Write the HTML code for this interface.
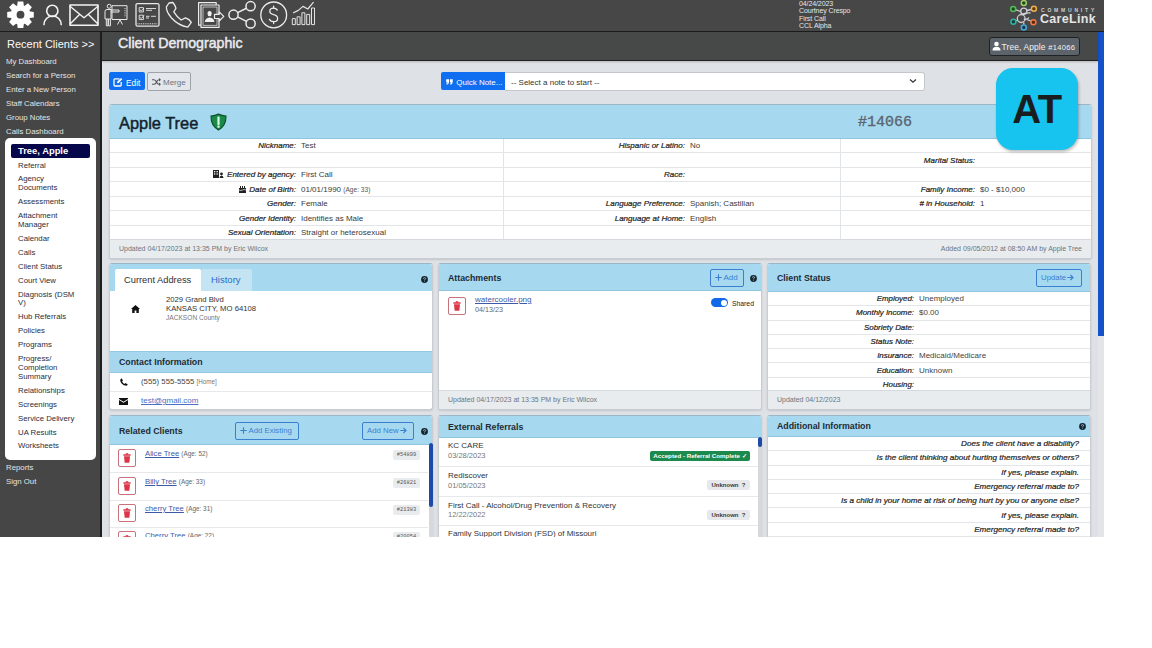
<!DOCTYPE html>
<html><head><meta charset="utf-8">
<style>
*{box-sizing:border-box;margin:0;padding:0}
html,body{width:1152px;height:648px;overflow:hidden;background:#fff;font-family:"Liberation Sans",sans-serif;color:#212529}
.a{position:absolute}
#top{left:0;top:0;width:1104px;height:32px;background:#474747;border-bottom:1px solid #1c1c1c}
#side{left:0;top:32px;width:102px;height:505px;background:#464646;border-right:2px solid #1e1e1e}
#hdr{left:102px;top:32px;width:996px;height:29px;background:#474848;border-bottom:1px solid #222;box-shadow:0 1px 2px rgba(0,0,0,.2);z-index:1}
#content{left:102px;top:61px;width:996px;height:476px;background:#dee1e5}
#sb{left:1098px;top:32px;width:6px;height:505px;background:#e4e5e7}
#sbthumb{left:1098px;top:32px;width:6px;height:304px;background:#1352c8}
.card{position:absolute;background:#fff;border:1px solid #c9cdd2;border-top-color:#9cb6c6;border-radius:3px;overflow:hidden;box-shadow:0 1px 2px rgba(0,0,0,.12)}
.ch{position:absolute;left:0;top:0;right:0;background:#a6d9f0;border-bottom:1px solid #8fc5df}
.ct{position:absolute;font-size:10px;color:#1e2a33}
.foot{position:absolute;left:0;right:0;bottom:0;background:#e9ecef;border-top:1px solid #d5d9dd;font-size:7px;color:#6c757d}
.sl{font-size:7.8px;line-height:13.9px;color:#e4e4e4;white-space:nowrap}
.sm{font-size:7.8px;line-height:8.9px;color:#2d2d3a;white-space:nowrap}
.sm div{padding:2.5px 0}
.row{height:14.45px;border-bottom:1px solid #e3e6e9}
.lab{position:absolute;font-size:8px;line-height:14.45px;font-style:italic;font-weight:normal;-webkit-text-stroke:0.2px #222;color:#222;white-space:nowrap;text-align:right}
.val{position:absolute;font-size:8px;line-height:14.45px;color:#3a3a3a;white-space:nowrap}
.ttl{font-size:8.8px;font-weight:bold;color:#1d2b36;white-space:nowrap}
.row2{height:14.3px;border-bottom:1px solid #e3e6e9}
.row3{height:14.3px;border-bottom:1px solid #e3e6e9}
.lab2{position:absolute;font-size:7.9px;line-height:14.3px;font-style:italic;font-weight:normal;-webkit-text-stroke:0.2px #222;color:#222;white-space:nowrap}
.val2{position:absolute;font-size:8px;line-height:14.3px;color:#444;white-space:nowrap}
.ai{position:absolute;right:11px;font-size:8.1px;line-height:14.3px;font-style:italic;font-weight:normal;-webkit-text-stroke:0.2px #222;color:#222;white-space:nowrap}
.rc{position:absolute;left:35px;text-decoration-color:#7d95cf;font-size:7.7px;line-height:12px;color:#3d5aa8;white-space:nowrap}
.rc span{font-size:6.4px;color:#666}
.bdg{position:absolute;left:283px;width:27px;height:9.5px;background:#e9ecef;border-radius:2px;font-size:5.4px;line-height:10.5px;text-align:center;color:#555;font-family:"Liberation Mono",monospace}
.er{position:absolute;left:9px;margin-top:1px;font-size:8px;line-height:9.5px;color:#333;white-space:nowrap}
.er span{font-size:7.5px;color:#777}
.ubdg{position:absolute;left:268px;width:43px;height:10px;background:#e6e8eb;border-radius:2px;font-size:6px;font-weight:bold;line-height:10px;text-align:center;color:#3a3a3a;white-space:nowrap}
</style></head><body>

<div id="top" class="a">
<svg class="a" style="left:0;top:0" width="330" height="30" viewBox="0 0 330 30">
 <g fill="#fff">
  <g transform="translate(20.5,14.7)">
   <circle r="9.8"/>
   <path d="M-2.8 -13.3 L2.8 -13.3 L3.6 -7 L-3.6 -7 Z"/>
   <path d="M-2.8 -13.3 L2.8 -13.3 L3.6 -7 L-3.6 -7 Z" transform="rotate(45)"/>
   <path d="M-2.8 -13.3 L2.8 -13.3 L3.6 -7 L-3.6 -7 Z" transform="rotate(90)"/>
   <path d="M-2.8 -13.3 L2.8 -13.3 L3.6 -7 L-3.6 -7 Z" transform="rotate(135)"/>
   <path d="M-2.8 -13.3 L2.8 -13.3 L3.6 -7 L-3.6 -7 Z" transform="rotate(180)"/>
   <path d="M-2.8 -13.3 L2.8 -13.3 L3.6 -7 L-3.6 -7 Z" transform="rotate(225)"/>
   <path d="M-2.8 -13.3 L2.8 -13.3 L3.6 -7 L-3.6 -7 Z" transform="rotate(270)"/>
   <path d="M-2.8 -13.3 L2.8 -13.3 L3.6 -7 L-3.6 -7 Z" transform="rotate(315)"/>
   <circle r="3.9" fill="#474747"/>
  </g>
 </g>
 <g fill="none" stroke="#f4f4f4" stroke-width="1.6" stroke-linejoin="round" stroke-linecap="round">
  <circle cx="52.3" cy="10.9" r="5.6"/>
  <path d="M44 24.6 A8.6 8.6 0 0 1 61.2 24.6"/>
  <rect x="70" y="5" width="28" height="20.2"/>
  <path d="M70.3 6.5 L84 17.8 L97.7 6.5 M70.3 23.8 L79.5 14.5 M97.7 23.8 L88.5 14.5" stroke-width="1.4"/>
 </g>
 <g fill="none" stroke="#e8e8e8" stroke-width="1" stroke-linejoin="round">
  <circle cx="109.2" cy="6.3" r="2"/>
  <path d="M105 19 L105 11.5 Q105 9.5 107 9.5 L111 9.5 L111 19 Z"/>
  <path d="M106.3 19 L106.3 25.8 L108 25.8 L108 19 M108.6 19 L108.6 25.8 L110.4 25.8 L110.4 19"/>
  <path d="M111 10 L119 10 L119 12 L111 12"/>
  <rect x="112" y="5.7" width="15" height="13.8"/>
  <path d="M117.5 24.5 L120 20 L122.5 24.5"/>
  <path d="M125 8 V17" stroke-dasharray="1 1.2"/>
 </g>
 <g fill="none" stroke="#e8e8e8" stroke-width="1.3" stroke-linejoin="round">
  <rect x="136" y="3.6" width="23" height="22.6" rx="1.5"/>
  <rect x="139.2" y="7.6" width="4.2" height="4.4" stroke-width="0.9"/>
  <rect x="139.2" y="15.2" width="4.2" height="4.4" stroke-width="0.9"/>
  <path d="M140 9.8 L141.3 11 L144 8 M140 17.4 L141.3 18.6 L144 15.6" stroke-width="0.9"/>
  <path d="M146 8.5 H156 M146 10.3 H152 M146 16.3 H149.5 M151 16.3 H156 M146 18 H149" stroke-width="0.9"/>
  <path d="M137.5 23.8 H157.5" stroke-dasharray="1 0.8" stroke-width="1"/>
 </g>
 <g fill="none" stroke="#ececec" stroke-width="1.3" stroke-linejoin="round">
  <path d="M169 3 L172.6 2.5 Q173.8 2.8 176 8.2 L173.8 11.8 Q177 17 181.2 20 L185.5 17.8 Q189.5 19 191.3 22.4 L187.8 27.2 Q178.5 25.5 171.5 18 Q166 11.5 166.4 6.8 Z"/>
 </g>
 <g fill="none" stroke="#ececec" stroke-width="1.2" stroke-linejoin="round">
  <path d="M201 25.2 L198.6 25.2 L198.6 2.6 L216.2 2.6 L216.2 5"/>
  <rect x="201" y="5" width="18" height="22.4"/>
  <rect x="203" y="7" width="14" height="18.4" stroke-width="0.7"/>
  <path d="M214.5 14.3 L219.2 14.3 L219.2 11.8 L223.8 16.4 L219.2 21 L219.2 18.5 L214.5 18.5 Z" fill="#474747"/>
 </g>
 <g fill="#f0f0f0">
  <ellipse cx="209.6" cy="13.6" rx="2.1" ry="2.7"/>
  <path d="M204.8 22 Q205 18 209.6 17.4 Q214.2 18 214.4 22 Z"/>
 </g>
 <g fill="none" stroke="#ececec" stroke-width="1.5">
  <circle cx="233.5" cy="14.7" r="4.6"/>
  <circle cx="250.6" cy="6.2" r="4.6"/>
  <circle cx="250.6" cy="23.5" r="4.6"/>
  <path d="M237.6 12.6 L246.5 8.3 M237.6 16.8 L246.5 21.4"/>
 </g>
 <g fill="none" stroke="#ececec" stroke-width="1.3" stroke-linecap="round">
  <circle cx="273.7" cy="14.9" r="12.9"/>
  <path d="M277.3 10 Q276 8.2 273.6 8.2 Q269.8 8.2 269.8 11.3 Q269.8 13.8 273.6 14.6 Q277.6 15.5 277.6 18.4 Q277.6 21.6 273.6 21.6 Q270.6 21.6 269.4 19.4"/>
  <path d="M273.6 6.2 V8.2 M273.6 21.6 V23.6"/>
 </g>
 <g fill="none" stroke="#e4e4e4" stroke-width="1" stroke-linejoin="round">
  <rect x="292.3" y="18.6" width="3" height="6"/>
  <rect x="297.1" y="16.8" width="3" height="7.8"/>
  <rect x="301.9" y="12.8" width="3" height="11.8"/>
  <rect x="306.7" y="14.4" width="3" height="10.2"/>
  <rect x="311.5" y="8" width="3" height="16.6"/>
  <path d="M293.5 12.8 L298.3 10.4 L303 6.4 L307.8 9 L313.3 2.4" stroke-width="1.2" stroke-linecap="round"/>
 </g>
</svg>
<div class="a" style="left:799px;top:0px;font-size:7px;line-height:7.4px;color:#e6e6e6;letter-spacing:-0.1px">04/24/2023<br>Courtney Crespo<br>First Call<br>CCL Alpha</div>
<svg class="a" style="left:1004px;top:0" width="40" height="31" viewBox="1004 0 40 31">
 <g fill="none" stroke="#cfcfd4" stroke-width="1.3">
  <circle cx="1023.8" cy="11.2" r="3.1"/>
  <circle cx="1021.2" cy="18.6" r="3.9"/>
  <path d="M1020.5 14.5 Q1026 12.5 1030.5 13 M1023.8 19 Q1027.5 20 1029 17.5"/>
  <path d="M1016 9.8 L1020.5 11.5 M1031 9.5 L1027 10.5 M1016.2 20.8 L1017.8 20 M1030.8 20.8 L1026.5 19.5 M1023.8 24.6 V22.5"/>
 </g>
 <g stroke-width="1.5">
  <circle cx="1023.8" cy="3" r="2.5" fill="#1f4a14" stroke="#9fd36a"/>
  <circle cx="1013.2" cy="8.9" r="2.5" fill="#1e4a22" stroke="#4fbf5a"/>
  <circle cx="1033.9" cy="8.7" r="2.5" fill="#5a3a0a" stroke="#f2b04a"/>
  <circle cx="1013.4" cy="21.7" r="2.5" fill="#12403a" stroke="#2fb3a0"/>
  <circle cx="1033.4" cy="22.2" r="2.5" fill="#5a2a10" stroke="#ee7a45"/>
  <circle cx="1023.8" cy="27.6" r="2.5" fill="#143a50" stroke="#4aa8d8"/>
 </g>
</svg>
<div class="a" style="left:1041px;top:6.7px;font-size:5px;line-height:6px;letter-spacing:2.8px;color:#d0d0d0;font-weight:bold">COMMUNITY</div>
<div class="a" style="left:1040px;top:12px;font-size:12.5px;line-height:14px;letter-spacing:0.3px;color:#e4e4e4;font-weight:bold">CareLink</div>
</div>


<div id="side" class="a">
 <div class="a" style="left:7px;top:6px;font-size:11px;line-height:13px;color:#fafafa;white-space:nowrap">Recent Clients &gt;&gt;</div>
 <div class="a sl" style="left:6px;top:23px">My Dashboard<br>Search for a Person<br>Enter a New Person<br>Staff Calendars<br>Group Notes<br>Calls Dashboard</div>
 <div class="a" style="left:5px;top:106px;width:91px;height:322px;background:#fff;border-radius:5px"></div>
 <div class="a" style="left:11px;top:112px;width:79px;height:14px;background:#06064a;border-radius:2px"></div>
 <div class="a" style="left:18px;top:112px;font-size:9.4px;line-height:14px;font-weight:bold;color:#fff">Tree, Apple</div>
 <div class="a sm" style="left:18px;top:127px">
  <div>Referral</div><div>Agency<br>Documents</div><div>Assessments</div><div>Attachment<br>Manager</div><div>Calendar</div><div>Calls</div><div>Client Status</div><div>Court View</div><div>Diagnosis (DSM<br>V)</div><div>Hub Referrals</div><div>Policies</div><div>Programs</div><div>Progress/<br>Completion<br>Summary</div><div>Relationships</div><div>Screenings</div><div>Service Delivery</div><div>UA Results</div><div>Worksheets</div>
 </div>
 <div class="a sl" style="left:6px;top:429px">Reports<br>Sign Out</div>
</div>


<div id="hdr" class="a">
 <div class="a" style="left:16px;top:3px;font-size:14.2px;line-height:16px;color:#ececec;-webkit-text-stroke:0.45px #ececec;white-space:nowrap">Client Demographic</div>
 <div class="a" style="left:887px;top:4.5px;width:91px;height:19px;background:#5c636a;border:1.5px solid #1f2225;border-radius:3px"></div>
 <svg class="a" style="left:890px;top:9px" width="9" height="10" viewBox="0 0 9 10"><circle cx="4.5" cy="3" r="2.3" fill="#fff"/><path d="M0.5 9.5 Q0.5 5.8 4.5 5.8 Q8.5 5.8 8.5 9.5 Z" fill="#fff"/></svg>
 <div class="a" style="left:899.5px;top:6px;font-size:8.4px;line-height:18px;color:#f2f2f2;white-space:nowrap;letter-spacing:0.15px">Tree, Apple <span style="font-size:7.6px;letter-spacing:0.3px">#14066</span></div>
</div>

<div id="content" class="a"></div>
<div id="sb" class="a"></div>
<div id="sbthumb" class="a"></div>


<!-- button row -->
<div class="a" style="left:109px;top:72px;width:36px;height:18px;background:#0f6ff0;border-radius:2px"></div>
<svg class="a" style="left:113px;top:77px" width="10" height="10" viewBox="0 0 10 10"><path d="M6.5 1.8 H2 Q1 1.8 1 2.8 V8 Q1 9 2 9 H7.2 Q8.2 9 8.2 8 V5" fill="none" stroke="#fff" stroke-width="1.3"/><path d="M4 6.3 L4.3 4.6 L8 0.9 L9.3 2.2 L5.6 5.9 Z" fill="#fff"/></svg>
<div class="a" style="left:126px;top:74px;font-size:8.3px;line-height:18px;color:#fff">Edit</div>
<div class="a" style="left:147px;top:72px;width:44px;height:19px;background:#e3e6ea;border:1px solid #9ea3a8;border-radius:2px"></div>
<svg class="a" style="left:152px;top:78px" width="9" height="8" viewBox="0 0 9 8"><path d="M0 1.8 H2 Q3.5 1.8 4.5 4 Q5.5 6.2 7 6.2 H8 M0 6.2 H2 Q3.5 6.2 4.5 4 Q5.5 1.8 7 1.8 H8" fill="none" stroke="#555" stroke-width="1.1"/><path d="M7 0 L9 1.8 L7 3.6 Z M7 4.4 L9 6.2 L7 8 Z" fill="#555"/></svg>
<div class="a" style="left:163px;top:73px;font-size:8px;line-height:19px;color:#6c757d">Merge</div>

<div class="a" style="left:441px;top:72px;width:65px;height:18px;background:#0f6ff0;border-radius:2px 0 0 2px"></div>
<div class="a" style="left:446px;top:73.5px;font-size:8px;line-height:18px;color:#fff;white-space:nowrap"><svg style="vertical-align:0px;margin-right:1px" width="7" height="6" viewBox="0 0 7 6"><path d="M0.2 3 Q0.2 0.5 2.8 0.2 V1.4 Q1.6 1.6 1.5 2.6 H3 V5.8 H0.2 Z M3.9 3 Q3.9 0.5 6.5 0.2 V1.4 Q5.3 1.6 5.2 2.6 H6.7 V5.8 H3.9 Z" fill="#fff" transform="rotate(180 3.45 3)"/></svg> Quick Note...</div>
<div class="a" style="left:505px;top:72px;width:420px;height:19px;background:#fff;border:1px solid #c3c7cb;border-left:none;border-radius:0 3px 3px 0"></div>
<div class="a" style="left:511px;top:73px;font-size:8px;line-height:19px;color:#333;white-space:nowrap">-- Select a note to start --</div>
<svg class="a" style="left:909px;top:78px" width="8" height="6" viewBox="0 0 8 6"><path d="M1 1.5 L4 4.3 L7 1.5" fill="none" stroke="#333" stroke-width="1.2"/></svg>
<!-- demographic card -->
<div class="card" style="left:109px;top:104px;width:983px;height:155px">
  <div class="ch" style="height:34px"></div>
  <div class="a" style="left:9px;top:8px;font-size:16.4px;line-height:20px;color:#14212b;-webkit-text-stroke:0.45px #14212b">Apple Tree</div>
  <svg class="a" style="left:100px;top:8px" width="17" height="18" viewBox="0 0 17 18"><path d="M8.5 1 Q12 2.8 16 3 Q16.3 12.5 8.5 17 Q0.7 12.5 1 3 Q5 2.8 8.5 1 Z" fill="#1a8a48" stroke="#0b4f2b" stroke-width="1.1"/><rect x="7.4" y="3.6" width="2.2" height="8.3" rx="0.6" fill="#d8ffe2"/><rect x="7.4" y="12.6" width="2.2" height="2.1" rx="0.5" fill="#d8ffe2"/></svg>
  <div class="a" style="left:748px;top:9px;font-family:'Liberation Mono',monospace;font-size:15px;line-height:18px;color:#5a6570;-webkit-text-stroke:0.35px #5a6570">#14066</div>
  <div class="a" style="left:0;top:34px;width:981px">
   <div class="row"></div><div class="row"></div><div class="row"></div><div class="row"></div><div class="row"></div><div class="row"></div><div class="row" style="border-bottom:none"></div>
  </div>
  <div class="a" style="left:393px;top:34px;width:1px;height:101px;background:#e2e5e8"></div>
  <div class="a" style="left:730px;top:34px;width:1px;height:101px;background:#e2e5e8"></div>
  <div class="lab" style="right:795px;top:34px">Nickname:</div><div class="val" style="left:191px;top:34px">Test</div>
  <div class="lab" style="right:795px;top:63px"><svg style="vertical-align:-1px;margin-right:3px" width="11" height="8" viewBox="0 0 11 8"><path d="M0 0 H6 V8 H0 Z" fill="#222"/><rect x="1" y="1" width="1.3" height="1.3" fill="#fff"/><rect x="3.5" y="1" width="1.3" height="1.3" fill="#fff"/><rect x="1" y="3.3" width="1.3" height="1.3" fill="#fff"/><rect x="3.5" y="3.3" width="1.3" height="1.3" fill="#fff"/><circle cx="8.5" cy="4" r="1.4" fill="#222"/><path d="M6.5 8 Q6.5 5.8 8.5 5.8 Q10.5 5.8 10.5 8 Z" fill="#222"/></svg>Entered by agency:</div><div class="val" style="left:191px;top:63px">First Call</div>
  <div class="lab" style="right:795px;top:77.5px"><svg style="vertical-align:-1px;margin-right:3px" width="7" height="8" viewBox="0 0 7 8"><rect x="0" y="3" width="7" height="5" fill="#222"/><rect x="1" y="1" width="1" height="2" fill="#222"/><rect x="3" y="1" width="1" height="2" fill="#222"/><rect x="5" y="1" width="1" height="2" fill="#222"/><path d="M0 5 Q1.7 6 3.5 5 Q5.3 4 7 5" stroke="#fff" stroke-width="0.7" fill="none"/></svg>Date of Birth:</div><div class="val" style="left:191px;top:77.5px">01/01/1990 <span style="font-size:6.6px;color:#555">(Age: 33)</span></div>
  <div class="lab" style="right:795px;top:92px">Gender:</div><div class="val" style="left:191px;top:92px">Female</div>
  <div class="lab" style="right:795px;top:106.5px">Gender Identity:</div><div class="val" style="left:191px;top:106.5px">Identifies as Male</div>
  <div class="lab" style="right:795px;top:121px">Sexual Orientation:</div><div class="val" style="left:191px;top:121px">Straight or heterosexual</div>
  <div class="lab" style="right:406px;top:34px">Hispanic or Latino:</div><div class="val" style="left:580px;top:34px">No</div>
  <div class="lab" style="right:406px;top:63px">Race:</div>
  <div class="lab" style="right:406px;top:92px">Language Preference:</div><div class="val" style="left:580px;top:92px">Spanish; Castilian</div>
  <div class="lab" style="right:406px;top:106.5px">Language at Home:</div><div class="val" style="left:580px;top:106.5px">English</div>
  <div class="lab" style="right:116px;top:48.5px">Marital Status:</div>
  <div class="lab" style="right:116px;top:77.5px">Family Income:</div><div class="val" style="left:870px;top:77.5px">$0 - $10,000</div>
  <div class="lab" style="right:116px;top:92px"># in Household:</div><div class="val" style="left:870px;top:92px">1</div>
  <div class="foot" style="height:19px"><div class="a" style="left:9px;top:0;line-height:18px">Updated 04/17/2023 at 13:35 PM by Eric Wilcox</div><div class="a" style="right:9px;top:0;line-height:18px">Added 09/05/2012 at 08:50 AM by Apple Tree</div></div>
</div>
<!-- row 2 -->
<div class="card" style="left:109px;top:263px;width:324px;height:147px">
  <div class="ch" style="height:27px;border-bottom:none"></div>
  <div class="a" style="left:5px;top:5px;width:86px;height:22px;background:#fff;border-radius:2px 2px 0 0"></div>
  <div class="a" style="left:91px;top:5px;width:51px;height:22px;background:#c4e4f3;border-radius:2px 2px 0 0"></div>
  <div class="a" style="left:14px;top:5px;font-size:9.3px;line-height:22px;color:#2f2f2f;white-space:nowrap">Current Address</div>
  <div class="a" style="left:101px;top:5px;font-size:9.5px;line-height:22px;color:#2a6cc7;white-space:nowrap">History</div>
  <svg class="a" style="left:311px;top:12px" width="7" height="7" viewBox="0 0 7 7"><circle cx="3.5" cy="3.5" r="3.4" fill="#17252e"/><path d="M2.4 2.7 Q2.4 1.6 3.5 1.6 Q4.6 1.6 4.6 2.6 Q4.6 3.3 3.6 3.7 V4.3" fill="none" stroke="#a7d7ee" stroke-width="0.8"/><circle cx="3.55" cy="5.3" r="0.45" fill="#a7d7ee"/></svg>
  <svg class="a" style="left:21px;top:41px" width="9" height="8" viewBox="0 0 9 8"><path d="M4.5 0 L9 4 H7.8 V8 H5.4 V5.6 H3.6 V8 H1.2 V4 H0 Z" fill="#111"/></svg>
  <div class="a" style="left:56px;top:31px;font-size:7.7px;line-height:9px;color:#333;white-space:nowrap">2029 Grand Blvd<br>KANSAS CITY, MO 64108<br><span style="font-size:6.6px;color:#777">JACKSON County</span></div>
  <div class="a" style="left:0;top:87px;width:324px;height:22px;background:#a7d7ee;border-top:1px solid #93c8e2;border-bottom:1px solid #93c8e2"></div>
  <div class="a ttl" style="left:9px;top:87px;line-height:22px">Contact Information</div>
  <svg class="a" style="left:10px;top:114px" width="8" height="8" viewBox="0 0 8 8"><path d="M1.6 0.3 L3 2.6 L2 3.6 Q3 5.3 4.5 6 L5.5 5 L7.8 6.4 L6.8 7.8 Q3.5 7.8 1.4 5.3 Q0 3.3 0.3 1.4 Z" fill="#111"/></svg>
  <div class="a" style="left:31px;top:112px;font-size:7.8px;line-height:12px;color:#444;white-space:nowrap">(555) 555-5555 <span style="font-size:6.3px;color:#777">[Home]</span></div>
  <div class="a" style="left:0;top:127px;width:324px;height:1px;background:#e6e8ea"></div>
  <svg class="a" style="left:9px;top:134px" width="9" height="7" viewBox="0 0 9 7"><path d="M0 0 H9 V1 L4.5 3.8 L0 1 Z M0 2 L4.5 4.8 L9 2 V7 H0 Z" fill="#111"/></svg>
  <div class="a" style="left:31px;top:131px;font-size:8px;line-height:12px;color:#4a6fc4;text-decoration:underline;white-space:nowrap">test@gmail.com</div>
</div>
<div class="card" style="left:438px;top:263px;width:324px;height:147px">
  <div class="ch" style="height:27px"></div>
  <div class="a ttl" style="left:9px;top:1px;line-height:26px">Attachments</div>
  <div class="a" style="left:271px;top:5px;width:34px;height:18px;border:1px solid #3a7fd0;border-radius:2px"></div>
  <div class="a" style="left:276px;top:5px;font-size:8px;line-height:18px;color:#3a7fd0;white-space:nowrap"><svg style="vertical-align:-0.5px;margin-right:1.5px" width="7" height="7" viewBox="0 0 7 7"><path d="M3.5 0.3 V6.7 M0.3 3.5 H6.7" fill="none" stroke="#3a7fd0" stroke-width="1.1"/></svg>Add</div>
  <svg class="a" style="left:311px;top:11px" width="7" height="7" viewBox="0 0 7 7"><circle cx="3.5" cy="3.5" r="3.4" fill="#17252e"/><path d="M2.4 2.7 Q2.4 1.6 3.5 1.6 Q4.6 1.6 4.6 2.6 Q4.6 3.3 3.6 3.7 V4.3" fill="none" stroke="#a7d7ee" stroke-width="0.8"/><circle cx="3.55" cy="5.3" r="0.45" fill="#a7d7ee"/></svg><div class="a" style="left:9px;top:33px;width:18px;height:18px;border:1px solid #c9727b;border-radius:2px;background:#fff"></div><svg class="a" style="left:14px;top:37px" width="8" height="10" viewBox="0 0 8 10"><rect x="0.3" y="1.2" width="7.4" height="1.5" rx="0.4" fill="#dc3545"/><rect x="2.8" y="0.2" width="2.4" height="1.4" fill="#dc3545"/><path d="M1 3.2 H7 L6.4 9.2 Q6.3 9.8 5.7 9.8 H2.3 Q1.7 9.8 1.6 9.2 Z" fill="#dc3545"/></svg>
  <div class="a" style="left:36px;top:31px;font-size:8px;line-height:10px;color:#3d5aa8;text-decoration:underline;white-space:nowrap">watercooler.png</div>
  <div class="a" style="left:36px;top:41px;font-size:7.2px;line-height:9px;color:#666;white-space:nowrap">04/13/23</div>
  <div class="a" style="left:272px;top:34px;width:17px;height:9px;border-radius:5px;background:#1368e8"></div>
  <div class="a" style="left:281.5px;top:35.5px;width:6px;height:6px;border-radius:3px;background:#fff"></div>
  <div class="a" style="left:293px;top:34.5px;font-size:6.8px;line-height:10px;color:#222;white-space:nowrap">Shared</div>
  <div class="foot" style="height:19px"><div class="a" style="left:9px;top:0;line-height:18px">Updated 04/17/2023 at 13:35 PM by Eric Wilcox</div></div>
</div>
<div class="card" style="left:767px;top:263px;width:324px;height:147px">
  <div class="ch" style="height:28px"></div>
  <div class="a ttl" style="left:9px;top:1px;line-height:26px">Client Status</div>
  <div class="a" style="left:268px;top:5px;width:46px;height:18px;border:1px solid #3a7fd0;border-radius:2px"></div>
  <div class="a" style="left:273px;top:5px;font-size:7.8px;line-height:18px;color:#3a7fd0;white-space:nowrap">Update<svg style="vertical-align:-0.5px;margin-left:1px" width="7" height="7" viewBox="0 0 7 7"><path d="M0.3 3.5 H6 M3.4 0.9 L6 3.5 L3.4 6.1" fill="none" stroke="#3a7fd0" stroke-width="1.2"/></svg></div>
  <div class="a" style="left:0;top:28px;width:322px">
   <div class="row2"></div><div class="row2"></div><div class="row2"></div><div class="row2"></div><div class="row2"></div><div class="row2"></div>
  </div>
  <div class="lab2" style="right:176px;top:28px">Employed:</div><div class="val2" style="left:151px;top:28px">Unemployed</div>
  <div class="lab2" style="right:176px;top:42.3px">Monthly Income:</div><div class="val2" style="left:151px;top:42.3px">$0.00</div>
  <div class="lab2" style="right:176px;top:56.6px">Sobriety Date:</div>
  <div class="lab2" style="right:176px;top:70.9px">Status Note:</div>
  <div class="lab2" style="right:176px;top:85.2px">Insurance:</div><div class="val2" style="left:151px;top:85.2px">Medicaid/Medicare</div>
  <div class="lab2" style="right:176px;top:99.5px">Education:</div><div class="val2" style="left:151px;top:99.5px">Unknown</div>
  <div class="lab2" style="right:176px;top:113.8px">Housing:</div>
  <div class="foot" style="height:19px"><div class="a" style="left:9px;top:0;line-height:18px">Updated 04/12/2023</div></div>
</div>
<!-- row 3 -->
<div class="card" style="left:109px;top:415px;width:324px;height:130px">
  <div class="ch" style="height:29px"></div>
  <div class="a ttl" style="left:9px;top:1px;line-height:28px">Related Clients</div>
  <div class="a" style="left:125px;top:6px;width:64px;height:18px;border:1px solid #3a7fd0;border-radius:2px"></div>
  <div class="a" style="left:130px;top:6px;font-size:7.8px;line-height:18px;color:#3a7fd0;white-space:nowrap"><svg style="vertical-align:-0.5px;margin-right:1.5px" width="7" height="7" viewBox="0 0 7 7"><path d="M3.5 0.3 V6.7 M0.3 3.5 H6.7" fill="none" stroke="#3a7fd0" stroke-width="1.1"/></svg>Add Existing</div>
  <div class="a" style="left:252px;top:6px;width:52px;height:18px;border:1px solid #3a7fd0;border-radius:2px"></div>
  <div class="a" style="left:257px;top:6px;font-size:7.8px;line-height:18px;color:#3a7fd0;white-space:nowrap">Add New<svg style="vertical-align:-0.5px;margin-left:1px" width="7" height="7" viewBox="0 0 7 7"><path d="M0.3 3.5 H6 M3.4 0.9 L6 3.5 L3.4 6.1" fill="none" stroke="#3a7fd0" stroke-width="1.2"/></svg></div>
  <svg class="a" style="left:311px;top:12px" width="7" height="7" viewBox="0 0 7 7"><circle cx="3.5" cy="3.5" r="3.4" fill="#17252e"/><path d="M2.4 2.7 Q2.4 1.6 3.5 1.6 Q4.6 1.6 4.6 2.6 Q4.6 3.3 3.6 3.7 V4.3" fill="none" stroke="#a7d7ee" stroke-width="0.8"/><circle cx="3.55" cy="5.3" r="0.45" fill="#a7d7ee"/></svg>
  <div class="a" style="left:0;top:56px;width:318px;height:1px;background:#e6e8ea"></div>
  <div class="a" style="left:0;top:83.5px;width:318px;height:1px;background:#e6e8ea"></div>
  <div class="a" style="left:0;top:111px;width:318px;height:1px;background:#e6e8ea"></div>
  <div class="a" style="left:8px;top:33px;width:18px;height:18px;border:1px solid #c9727b;border-radius:2px;background:#fff"></div><svg class="a" style="left:13px;top:37px" width="8" height="10" viewBox="0 0 8 10"><rect x="0.3" y="1.2" width="7.4" height="1.5" rx="0.4" fill="#dc3545"/><rect x="2.8" y="0.2" width="2.4" height="1.4" fill="#dc3545"/><path d="M1 3.2 H7 L6.4 9.2 Q6.3 9.8 5.7 9.8 H2.3 Q1.7 9.8 1.6 9.2 Z" fill="#dc3545"/></svg><div class="a" style="left:8px;top:61px;width:18px;height:18px;border:1px solid #c9727b;border-radius:2px;background:#fff"></div><svg class="a" style="left:13px;top:65px" width="8" height="10" viewBox="0 0 8 10"><rect x="0.3" y="1.2" width="7.4" height="1.5" rx="0.4" fill="#dc3545"/><rect x="2.8" y="0.2" width="2.4" height="1.4" fill="#dc3545"/><path d="M1 3.2 H7 L6.4 9.2 Q6.3 9.8 5.7 9.8 H2.3 Q1.7 9.8 1.6 9.2 Z" fill="#dc3545"/></svg><div class="a" style="left:8px;top:88px;width:18px;height:18px;border:1px solid #c9727b;border-radius:2px;background:#fff"></div><svg class="a" style="left:13px;top:92px" width="8" height="10" viewBox="0 0 8 10"><rect x="0.3" y="1.2" width="7.4" height="1.5" rx="0.4" fill="#dc3545"/><rect x="2.8" y="0.2" width="2.4" height="1.4" fill="#dc3545"/><path d="M1 3.2 H7 L6.4 9.2 Q6.3 9.8 5.7 9.8 H2.3 Q1.7 9.8 1.6 9.2 Z" fill="#dc3545"/></svg><div class="a" style="left:8px;top:115px;width:18px;height:18px;border:1px solid #c9727b;border-radius:2px;background:#fff"></div><svg class="a" style="left:13px;top:119px" width="8" height="10" viewBox="0 0 8 10"><rect x="0.3" y="1.2" width="7.4" height="1.5" rx="0.4" fill="#dc3545"/><rect x="2.8" y="0.2" width="2.4" height="1.4" fill="#dc3545"/><path d="M1 3.2 H7 L6.4 9.2 Q6.3 9.8 5.7 9.8 H2.3 Q1.7 9.8 1.6 9.2 Z" fill="#dc3545"/></svg>
  <div class="rc" style="top:32px"><u>Alice Tree</u> <span>(Age: 52)</span></div>
  <div class="rc" style="top:60px"><u>Billy Tree</u> <span>(Age: 33)</span></div>
  <div class="rc" style="top:87px"><u>cherry Tree</u> <span>(Age: 31)</span></div>
  <div class="rc" style="top:114px"><u>Cherry Tree</u> <span>(Age: 22)</span></div>
  <div class="bdg" style="top:34px">#54899</div>
  <div class="bdg" style="top:62px">#26821</div>
  <div class="bdg" style="top:89px">#21383</div>
  <div class="bdg" style="top:116px">#20054</div>
  
</div>
<div class="card" style="left:438px;top:415px;width:324px;height:130px">
  <div class="ch" style="height:22px"></div>
  <div class="a ttl" style="left:9px;top:0px;line-height:22px">External Referrals</div>
  <div class="er" style="top:24px">KC CARE<br><span>03/28/2023</span></div>
  <div class="a" style="left:211px;top:34.5px;width:100px;height:10px;background:#1b8a4c;border-radius:2px;font-size:6.2px;line-height:10px;font-weight:bold;color:#fff;text-align:center;white-space:nowrap">Accepted - Referral Complete &#10003;</div>
  <div class="a" style="left:0;top:50px;width:319px;height:1px;background:#e6e8ea"></div>
  <div class="er" style="top:54px">Rediscover<br><span>01/05/2023</span></div>
  <div class="ubdg" style="top:64px">Unknown&nbsp; ?</div>
  <div class="a" style="left:0;top:80px;width:319px;height:1px;background:#e6e8ea"></div>
  <div class="er" style="top:83.5px">First Call - Alcohol/Drug Prevention &amp; Recovery<br><span>12/22/2022</span></div>
  <div class="ubdg" style="top:93.5px">Unknown&nbsp; ?</div>
  <div class="a" style="left:0;top:109px;width:319px;height:1px;background:#e6e8ea"></div>
  <div class="er" style="top:112px">Family Support Division (FSD) of Missouri</div>
  
</div>
<div class="card" style="left:767px;top:415px;width:324px;height:130px">
  <div class="ch" style="height:21px"></div>
  <div class="a ttl" style="left:9px;top:0px;line-height:21px">Additional Information</div>
  <svg class="a" style="left:311px;top:7px" width="7" height="7" viewBox="0 0 7 7"><circle cx="3.5" cy="3.5" r="3.4" fill="#17252e"/><path d="M2.4 2.7 Q2.4 1.6 3.5 1.6 Q4.6 1.6 4.6 2.6 Q4.6 3.3 3.6 3.7 V4.3" fill="none" stroke="#a7d7ee" stroke-width="0.8"/><circle cx="3.55" cy="5.3" r="0.45" fill="#a7d7ee"/></svg>
  <div class="a" style="left:0;top:21px;width:322px">
   <div class="row3"></div><div class="row3"></div><div class="row3"></div><div class="row3"></div><div class="row3"></div><div class="row3"></div><div class="row3"></div>
  </div>
  <div class="ai" style="top:21px">Does the client have a disability?</div>
  <div class="ai" style="top:35.3px">Is the client thinking about hurting themselves or others?</div>
  <div class="ai" style="top:49.6px">If yes, please explain.</div>
  <div class="ai" style="top:63.9px">Emergency referral made to?</div>
  <div class="ai" style="top:78.2px">Is a child in your home at risk of being hurt by you or anyone else?</div>
  <div class="ai" style="top:92.5px">If yes, please explain.</div>
  <div class="ai" style="top:106.8px">Emergency referral made to?</div>
</div>
<div class="a" style="left:429px;top:443px;width:4px;height:94px;background:#d6d8db"></div><div class="a" style="left:429px;top:443px;width:4px;height:64px;background:#1b4aa9;border-radius:2px"></div>
<div class="a" style="left:758px;top:437px;width:4px;height:100px;background:#d6d8db"></div><div class="a" style="left:758px;top:437px;width:4px;height:10px;background:#1b4aa9;border-radius:2px"></div>
<!-- AT avatar -->
<div class="a" style="left:996px;top:68px;width:82px;height:82px;background:#17c3ef;border-radius:17px;box-shadow:1px 2px 3px rgba(0,0,0,.25)"></div>
<div class="a" style="left:996px;top:88.5px;width:82px;text-align:center;font-size:40px;line-height:40px;font-weight:bold;color:#1a1d1f;letter-spacing:-0.5px">AT</div>
<div class="a" style="left:0;top:537px;width:1152px;height:111px;background:#fff"></div>
<div class="a" style="left:1104px;top:0;width:48px;height:648px;background:#fff"></div>
</body></html>
